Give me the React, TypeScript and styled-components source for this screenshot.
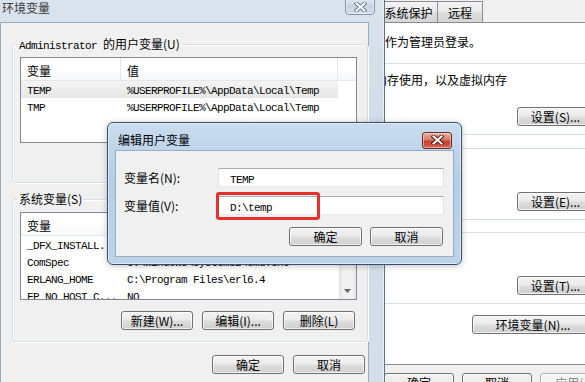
import React from "react";
import styled, { createGlobalStyle, css } from "styled-components";

const GlobalStyle = createGlobalStyle`
  html, body {
    margin: 0;
    padding: 0;
    overflow: hidden;
    background: #f0f0f0;
  }
  body {
    font-family: "Noto Sans CJK SC", "Liberation Sans", sans-serif;
    font-size: 12px;
    color: #000;
  }
`;

const Desktop = styled.div`
  position: relative;
  width: 585px;
  height: 382px;
  overflow: hidden;
  background: #f0f0f0;
`;

const Mono = styled.span`
  font-family: "Liberation Mono", "DejaVu Sans Mono", monospace;
  font-size: 11px;
  letter-spacing: -0.6px;
`;

const Button = styled.button<{ $w: number; $disabled?: boolean }>`
  box-sizing: border-box;
  flex-shrink: 0;
  width: ${(p) => p.$w}px;
  height: 19px;
  padding: 0;
  border: 1px solid ${(p) => (p.$disabled ? "#adb2b5" : "#707070")};
  border-radius: 3px;
  background: ${(p) =>
    p.$disabled
      ? "#f4f4f4"
      : "linear-gradient(#f2f2f2 0%, #ebebeb 48%, #dddddd 52%, #cfcfcf 100%)"};
  box-shadow: inset 0 0 0 1px rgba(255, 255, 255, 0.7);
  font-family: inherit;
  font-size: 12px;
  line-height: 16px;
  color: ${(p) => (p.$disabled ? "#8a8a8a" : "#000")};
  white-space: nowrap;
`;

const ButtonRow = styled.div<{ $mt: number; $gap: number; $pr?: number }>`
  display: flex;
  justify-content: flex-end;
  gap: ${(p) => p.$gap}px;
  margin-top: ${(p) => p.$mt}px;
  padding-right: ${(p) => p.$pr ?? 0}px;
`;

/* ---------- window chrome ---------- */

const GlassFrame = styled.div<{ $active?: boolean }>`
  position: absolute;
  box-sizing: border-box;
  display: flex;
  flex-direction: column;
  border: 1px solid ${(p) => (p.$active ? "#34506e" : "#5f7186")};
  background: ${(p) =>
    p.$active
      ? "linear-gradient(#c9dcef, #b5cde7 40%, #bdd3ea)"
      : "linear-gradient(#dae4ee, #cdd9e6 40%, #d5e0ec)"};
  box-shadow: inset 0 0 0 1px rgba(255, 255, 255, 0.5);
`;

const EnvWindow = styled(GlassFrame)`
  z-index: 1;
  left: -8px;
  top: -7px;
  width: 393px;
  height: 420px;
  padding: 0 15px 7px 7px;
  border-radius: 7px 7px 0 0;
`;

const EditWindow = styled(GlassFrame)`
  z-index: 2;
  left: 107px;
  top: 122px;
  width: 355px;
  height: 143px;
  padding: 0 7px 7px;
  border-radius: 6px;
  box-shadow: inset 0 0 0 1px rgba(255, 255, 255, 0.5), 0 1px 6px rgba(0, 0, 0, 0.25);
`;

const TitleBar = styled.div<{ $h: number; $pt?: number }>`
  box-sizing: border-box;
  display: flex;
  align-items: center;
  flex-shrink: 0;
  height: ${(p) => p.$h}px;
  padding-top: ${(p) => p.$pt ?? 0}px;
`;

const Title = styled.div<{ $pl: number; $dim?: boolean }>`
  padding-left: ${(p) => p.$pl}px;
  line-height: 16px;
  color: ${(p) => (p.$dim ? "#3a3a3a" : "#000")};
`;

const CloseButton = styled.div<{ $active?: boolean; $mr: number; $top?: boolean }>`
  box-sizing: border-box;
  display: flex;
  align-items: center;
  justify-content: center;
  margin-left: auto;
  margin-right: ${(p) => p.$mr}px;
  width: 30px;
  height: ${(p) => (p.$top ? 21 : 17)}px;
  align-self: ${(p) => (p.$top ? "flex-start" : "center")};
  padding-top: ${(p) => (p.$top ? 4 : 0)}px;
  border: 1px solid ${(p) => (p.$active ? "#6a2a22" : "#8293a8")};
  border-radius: ${(p) => (p.$top ? "0 0 4px 4px" : "3px")};
  background: ${(p) =>
    p.$active
      ? "linear-gradient(#eab0a2 0%, #d77a66 45%, #c4412a 55%, #d2664f 100%)"
      : "linear-gradient(#e6edf5 0%, #d5dfea 45%, #c6d3e1 55%, #d3dee9 100%)"};
  box-shadow: inset 0 0 0 1px rgba(255, 255, 255, 0.45);
`;

function CloseGlyph({ active }: { active?: boolean }) {
  const outline = active ? "#4a1a14" : "#6d7c8e";
  return (
    <svg width="13" height="10" viewBox="0 0 13 10">
      <path d="M2.5 1.5 L10.5 8.5 M10.5 1.5 L2.5 8.5" stroke={outline} strokeWidth="4" strokeLinecap="square" />
      <path d="M2.5 1.5 L10.5 8.5 M10.5 1.5 L2.5 8.5" stroke="#fff" strokeWidth="2" strokeLinecap="square" />
    </svg>
  );
}

const DialogBody = styled.div`
  box-sizing: border-box;
  flex: 1;
  display: flex;
  flex-direction: column;
  min-height: 0;
  background: #f0f0f0;
  border: 1px solid #98abc2;
`;

const EnvBody = styled(DialogBody)`
  padding: 14px 0 0 11px;
`;

const EditBody = styled(DialogBody)`
  padding: 17px 9px 10px 8px;
`;

/* ---------- group boxes ---------- */

const GroupBox = styled.fieldset<{ $mt?: number }>`
  display: flex;
  flex-direction: column;
  min-width: 0;
  margin: ${(p) => p.$mt ?? 0}px 0 0;
  border: 1px solid #d5dfe5;
  border-radius: 3px;
  box-shadow: inset 1px 1px 0 #fff, 1px 1px 0 #fff;
`;

const EnvGroup = styled(GroupBox)`
  padding: 6px 10px 11px 7px;
`;

const SysGroup = styled(GroupBox)`
  margin-left: 5px;
  margin-right: 5px;
  padding: 2px 11px 8px 7px;
`;

const Legend = styled.legend`
  height: 14px;
  padding: 0 2px;
  margin-left: -3px;
  line-height: 14px;
`;

/* ---------- list view ---------- */

const ListBox = styled.div<{ $h: number }>`
  box-sizing: border-box;
  display: flex;
  height: ${(p) => p.$h}px;
  border: 1px solid #828790;
  background: #fff;
  overflow: hidden;
`;

const ListMain = styled.div`
  flex: 1;
  min-width: 0;
  display: flex;
  flex-direction: column;
`;

const HeaderRow = styled.div`
  box-sizing: border-box;
  display: flex;
  flex-shrink: 0;
  height: 23px;
  border-bottom: 1px solid #e5e7ea;
  background: linear-gradient(#ffffff, #ffffff 55%, #f5f6f8);
`;

const HeaderCell = styled.div<{ $w: number }>`
  box-sizing: border-box;
  width: ${(p) => p.$w}px;
  padding: 4px 0 0 6px;
  line-height: 18px;
  border-right: 1px solid #e3e5e8;
`;

const HeaderFill = styled.div`
  flex: 1;
`;

const ItemRow = styled.div<{ $selected?: boolean }>`
  display: flex;
  flex-shrink: 0;
  width: 317px;
  height: 17px;
  ${(p) =>
    p.$selected &&
    css`
      background: linear-gradient(#f3f3f3, #e7e7e7);
    `}
`;

const Cell = styled.div<{ $w: number }>`
  box-sizing: border-box;
  width: ${(p) => p.$w}px;
  padding-left: 6px;
  line-height: 16px;
  white-space: nowrap;
  overflow: hidden;
`;

const ScrollBar = styled.div`
  display: flex;
  flex-direction: column;
  flex-shrink: 0;
  width: 17px;
  background: linear-gradient(to right, #e3e3e3, #f1f1f1 25%, #f1f1f1 75%, #e6e6e6);
`;

const ScrollArrow = styled.div`
  display: flex;
  align-items: center;
  justify-content: center;
  height: 17px;
  flex-shrink: 0;
`;

const ScrollThumb = styled.div`
  box-sizing: border-box;
  height: 14px;
  margin: 0 1px;
  border: 1px solid #979797;
  border-radius: 2px;
  background: linear-gradient(to right, #f4f4f4, #e0e0e0);
`;

const ScrollTrack = styled.div`
  flex: 1;
`;

type Var = { name: string; value: string };

function VarList({
  rows,
  height,
  selected,
  scroll
}: {
  rows: Var[];
  height: number;
  selected?: number;
  scroll?: boolean;
}) {
  return (
    <ListBox $h={height}>
      <ListMain>
        <HeaderRow>
          <HeaderCell $w={100}>变量</HeaderCell>
          <HeaderCell $w={217}>值</HeaderCell>
          <HeaderFill />
        </HeaderRow>
        {rows.map((r, i) => (
          <ItemRow key={r.name} $selected={i === selected}>
            <Cell $w={100}>
              <Mono>{r.name}</Mono>
            </Cell>
            <Cell $w={217}>
              <Mono>{r.value}</Mono>
            </Cell>
          </ItemRow>
        ))}
      </ListMain>
      {scroll && (
        <ScrollBar>
          <ScrollArrow>
            <svg width="7" height="4" viewBox="0 0 7 4">
              <polygon points="0,4 7,4 3.5,0" fill="#5b6470" />
            </svg>
          </ScrollArrow>
          <ScrollThumb />
          <ScrollTrack />
          <ScrollArrow>
            <svg width="7" height="4" viewBox="0 0 7 4">
              <polygon points="0,0 7,0 3.5,4" fill="#5b6470" />
            </svg>
          </ScrollArrow>
        </ScrollBar>
      )}
    </ListBox>
  );
}

/* ---------- edit dialog fields ---------- */

const FieldRow = styled.div`
  display: flex;
  align-items: center;
  & + & {
    margin-top: 9px;
  }
`;

const FieldLabel = styled.div`
  width: 94px;
  flex-shrink: 0;
  line-height: 16px;
`;

const InputWrap = styled.div`
  position: relative;
  flex: 1;
`;

const TextInput = styled.div`
  box-sizing: border-box;
  height: 19px;
  padding-left: 11px;
  border: 1px solid;
  border-color: #abadb3 #dbdfe6 #e3e9ef #e2e3ea;
  background: #fff;
  line-height: 17px;
`;

const Highlight = styled.div`
  position: absolute;
  left: -2px;
  top: -4px;
  width: 104px;
  height: 28px;
  box-sizing: border-box;
  border: 3px solid #e5312c;
  border-radius: 3px;
  pointer-events: none;
`;

/* ---------- system properties (background window) ---------- */

const SysWindow = styled.div`
  position: absolute;
  z-index: 0;
  left: 221px;
  top: 0;
  width: 399px;
  box-sizing: border-box;
  display: flex;
  flex-direction: column;
  padding: 0 8px;
  background: #f0f0f0;
`;

const TabStrip = styled.div`
  display: flex;
  align-items: flex-end;
  height: 22px;
  padding-left: 3px;
`;

const Tab = styled.div<{ $w: number; $selected?: boolean }>`
  box-sizing: border-box;
  width: ${(p) => p.$w}px;
  height: ${(p) => (p.$selected ? 22 : 21)}px;
  margin-right: -1px;
  margin-bottom: ${(p) => (p.$selected ? -1 : 0)}px;
  padding-top: 2px;
  text-align: center;
  line-height: 18px;
  border: 1px solid #898c95;
  border-bottom: none;
  background: ${(p) =>
    p.$selected ? "#fff" : "linear-gradient(#f3f3f3 0%, #ebebeb 48%, #dddddd 52%, #d5d5d5 100%)"};
`;

const TabPanel = styled.div`
  box-sizing: border-box;
  display: flex;
  flex-direction: column;
  height: 343px;
  border: 1px solid #898c95;
  background: #fff;
`;

const PanelNote = styled.div`
  margin: 11px 0 0 11px;
  line-height: 16px;
  white-space: nowrap;
`;

const GroupText = styled.div`
  line-height: 16px;
  white-space: nowrap;
`;

const EnvVarsButton = styled(Button)`
  align-self: flex-end;
  margin: 11px 17px 0 0;
`;

export default function App() {
  const userVars: Var[] = [
    { name: "TEMP", value: "%USERPROFILE%\\AppData\\Local\\Temp" },
    { name: "TMP", value: "%USERPROFILE%\\AppData\\Local\\Temp" }
  ];
  const sysVars: Var[] = [
    { name: "_DFX_INSTALL...", value: "C:\\Program Files\\Common Files\\" },
    { name: "ComSpec", value: "C:\\Windows\\system32\\cmd.exe" },
    { name: "ERLANG_HOME", value: "C:\\Program Files\\erl6.4" },
    { name: "FP_NO_HOST_C...", value: "NO" },
    { name: "NUMBER_OF_PR...", value: "4" }
  ];

  return (
    <Desktop>
      <GlobalStyle />

      <SysWindow>
        <TabStrip>
          <Tab $w={62}>计算机名</Tab>
          <Tab $w={38}>硬件</Tab>
          <Tab $w={50} $selected>
            高级
          </Tab>
          <Tab $w={59}>系统保护</Tab>
          <Tab $w={46}>远程</Tab>
        </TabStrip>
        <TabPanel>
          <PanelNote>要进行大多数更改，你必须作为管理员登录。</PanelNote>
          <SysGroup $mt={6}>
            <Legend>性能</Legend>
            <GroupText>视觉效果，处理器计划，内存使用，以及虚拟内存</GroupText>
            <ButtonRow $mt={19} $gap={0}>
              <Button $w={77}>设置(S)...</Button>
            </ButtonRow>
          </SysGroup>
          <SysGroup $mt={6}>
            <Legend>用户配置文件</Legend>
            <GroupText>与您登录有关的桌面设置</GroupText>
            <ButtonRow $mt={19} $gap={0}>
              <Button $w={77}>设置(E)...</Button>
            </ButtonRow>
          </SysGroup>
          <SysGroup $mt={5}>
            <Legend>启动和故障恢复</Legend>
            <GroupText>系统启动、系统失败和调试信息</GroupText>
            <ButtonRow $mt={19} $gap={0}>
              <Button $w={77}>设置(T)...</Button>
            </ButtonRow>
          </SysGroup>
          <EnvVarsButton $w={122}>环境变量(N)...</EnvVarsButton>
        </TabPanel>
        <ButtonRow $mt={8} $gap={8} $pr={2}>
          <Button $w={70}>确定</Button>
          <Button $w={70}>取消</Button>
          <Button $w={70} $disabled>
            应用(A)
          </Button>
        </ButtonRow>
      </SysWindow>

      <EnvWindow>
        <TitleBar $h={28}>
          <Title $pl={2} $dim>
            环境变量
          </Title>
          <CloseButton $mr={-6} $top>
            <CloseGlyph />
          </CloseButton>
        </TitleBar>
        <EnvBody>
          <EnvGroup>
            <Legend>
              <Mono>Administrator </Mono>的用户变量(U)
            </Legend>
            <VarList rows={userVars} height={86} selected={0} />
            <ButtonRow $mt={9} $gap={9} $pr={2}>
              <Button $w={72}>新建(N)...</Button>
              <Button $w={72}>编辑(E)...</Button>
              <Button $w={72}>删除(D)</Button>
            </ButtonRow>
          </EnvGroup>
          <EnvGroup $mt={9}>
            <Legend>系统变量(S)</Legend>
            <VarList rows={sysVars} height={88} scroll />
            <ButtonRow $mt={11} $gap={9} $pr={2}>
              <Button $w={72}>新建(W)...</Button>
              <Button $w={72}>编辑(I)...</Button>
              <Button $w={72}>删除(L)</Button>
            </ButtonRow>
          </EnvGroup>
          <ButtonRow $mt={13} $gap={9} $pr={3}>
            <Button $w={72}>确定</Button>
            <Button $w={72}>取消</Button>
          </ButtonRow>
        </EnvBody>
      </EnvWindow>

      <EditWindow $active>
        <TitleBar $h={27} $pt={7}>
          <Title $pl={3}>编辑用户变量</Title>
          <CloseButton $active $mr={2}>
            <CloseGlyph active />
          </CloseButton>
        </TitleBar>
        <EditBody>
          <FieldRow>
            <FieldLabel>变量名(N):</FieldLabel>
            <InputWrap>
              <TextInput>
                <Mono>TEMP</Mono>
              </TextInput>
            </InputWrap>
          </FieldRow>
          <FieldRow>
            <FieldLabel>变量值(V):</FieldLabel>
            <InputWrap>
              <TextInput>
                <Mono>D:\temp</Mono>
              </TextInput>
              <Highlight />
            </InputWrap>
          </FieldRow>
          <ButtonRow $mt={12} $gap={8} $pr={1}>
            <Button $w={73}>确定</Button>
            <Button $w={73}>取消</Button>
          </ButtonRow>
        </EditBody>
      </EditWindow>
    </Desktop>
  );
}
